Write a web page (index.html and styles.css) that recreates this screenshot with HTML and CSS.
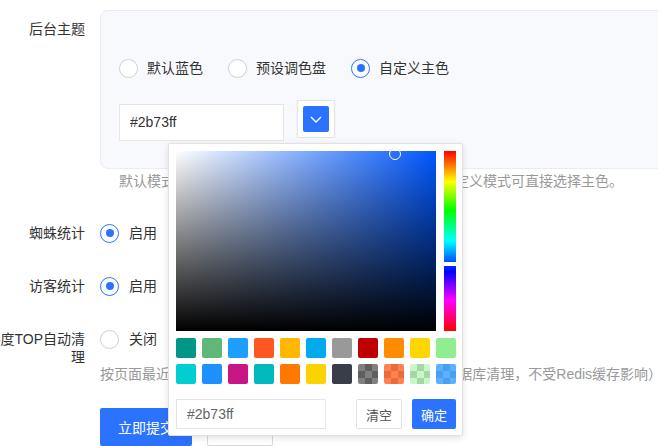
FILE: index.html
```html
<!DOCTYPE html>
<html lang="zh-CN">
<head>
<meta charset="utf-8">
<title>后台主题</title>
<link rel="stylesheet" href="styles.css">
</head>
<body>
<form class="form">
  <div class="row row-theme">
    <div class="label">后台主题</div>
    <div class="field">
      <div class="theme-card">
        <div class="radio-group">
          <label class="radio"><span class="circle"></span><span class="text">默认蓝色</span></label>
          <label class="radio"><span class="circle"></span><span class="text">预设调色盘</span></label>
          <label class="radio checked"><span class="circle"></span><span class="text">自定义主色</span></label>
        </div>
        <div class="color-row">
          <div class="color-input">#2b73ff</div>
          <div class="trigger">
            <span class="trigger-swatch">
              <svg width="12" height="7" viewBox="0 0 12 7"><polyline points="1,1 6,6 11,1" fill="none" stroke="#fff" stroke-width="1.4"/></svg>
            </span>
          </div>
          <div class="popup">
            <div class="sv-row">
              <div class="sat"><span class="sat-cursor"></span></div>
              <div class="hue"><span class="hue-thumb"></span></div>
            </div>
            <div class="swatches">
              <span class="sw" style="--c:#009688"></span>
              <span class="sw" style="--c:#5fb878"></span>
              <span class="sw" style="--c:#1e9fff"></span>
              <span class="sw" style="--c:#ff5722"></span>
              <span class="sw" style="--c:#ffb800"></span>
              <span class="sw" style="--c:#01aaed"></span>
              <span class="sw" style="--c:#999999"></span>
              <span class="sw" style="--c:#c00000"></span>
              <span class="sw" style="--c:#ff8c00"></span>
              <span class="sw" style="--c:#ffd700"></span>
              <span class="sw" style="--c:#90ee90"></span>
              <span class="sw" style="--c:#00ced1"></span>
              <span class="sw" style="--c:#1e90ff"></span>
              <span class="sw" style="--c:#c71585"></span>
              <span class="sw" style="--c:#00babd"></span>
              <span class="sw" style="--c:#ff7800"></span>
              <span class="sw" style="--c:#fad400"></span>
              <span class="sw" style="--c:#393d49"></span>
              <span class="sw alpha" style="--c:rgba(0,0,0,.5)"></span>
              <span class="sw alpha" style="--c:rgba(255,69,0,.68)"></span>
              <span class="sw alpha" style="--c:rgba(144,240,144,.5)"></span>
              <span class="sw alpha" style="--c:rgba(31,147,255,.73)"></span>
            </div>
            <div class="actions">
              <div class="pop-input">#2b73ff</div>
              <button type="button" class="btn-sm btn-clear">清空</button>
              <button type="button" class="btn-sm btn-ok">确定</button>
            </div>
          </div>
        </div>
      </div>
      <div class="hint hint-theme">默认模式使用系统蓝色，预设调色盘可选常用颜色，自定义模式可直接选择主色。</div>
    </div>
  </div>

  <div class="row">
    <div class="label">蜘蛛统计</div>
    <div class="field">
      <label class="radio checked"><span class="circle"></span><span class="text">启用</span></label>
    </div>
  </div>

  <div class="row">
    <div class="label">访客统计</div>
    <div class="field">
      <label class="radio checked"><span class="circle"></span><span class="text">启用</span></label>
    </div>
  </div>

  <div class="row">
    <div class="label">热度TOP自动清理</div>
    <div class="field">
      <label class="radio"><span class="circle"></span><span class="text">关闭</span></label>
      <div class="hint hint-clean">按页面最近7天访问量自动清理热度TOP以外的数据（仅数据库清理，不受Redis缓存影响）</div>
    </div>
  </div>

  <div class="row row-actions">
    <div class="label"></div>
    <div class="field buttons">
      <button type="button" class="btn btn-primary">立即提交</button>
      <button type="button" class="btn btn-default">重置</button>
    </div>
  </div>
</form>
</body>
</html>
```

FILE: styles.css
```css
html, body {
  margin: 0;
  padding: 0;
  background: #fff;
  overflow: hidden;
}

body {
  font-family: "Liberation Sans", "Noto Sans CJK SC", sans-serif;
  font-size: 14px;
  color: #333;
}

.form {
  width: 780px;
  margin-left: -21px;
  padding-top: 10px;
  display: flex;
  flex-direction: column;
  gap: 15px;
}

.row {
  display: grid;
  grid-template-columns: 121px 1fr;
}

.row-theme {
  margin-bottom: 6px;
}

.label {
  padding: 10px 15px 0 0;
  line-height: 18px;
  text-align: right;
  color: #333;
}

.field {
  min-width: 0;
}

/* theme card */
.theme-card {
  border: 1px solid #e9ecf2;
  border-radius: 8px;
  background: #f8f9fc;
  padding: 43px 18px 27px;
}

.radio-group {
  display: flex;
  align-items: center;
  gap: 25px;
  height: 28px;
}

.radio {
  display: inline-flex;
  align-items: center;
  gap: 10px;
  height: 38px;
  line-height: 20px;
  cursor: pointer;
}

.radio-group .radio {
  height: 28px;
  gap: 9px;
}

.circle {
  width: 19px;
  height: 19px;
  box-sizing: border-box;
  border: 1.5px solid #cdd1d9;
  border-radius: 50%;
  background: #fff;
  display: inline-flex;
  align-items: center;
  justify-content: center;
  flex: none;
}

.radio.checked .circle {
  border-color: #2b73ff;
}

.radio.checked .circle::after {
  content: "";
  width: 8px;
  height: 8px;
  border-radius: 50%;
  background: #2b73ff;
}

.text {
  color: #333;
}

.color-row {
  position: relative;
  display: flex;
  align-items: flex-start;
  margin-top: 18px;
}

.color-input {
  width: 165px;
  height: 37px;
  box-sizing: border-box;
  margin-top: 4px;
  border: 1px solid #e6e6e6;
  background: #fff;
  padding-left: 10px;
  line-height: 35px;
  color: #333;
}

.trigger {
  margin-left: 13px;
  width: 38px;
  height: 38px;
  box-sizing: border-box;
  border: 1px solid #e3e3e3;
  border-radius: 2px;
  background: #fff;
  padding: 5px;
  box-shadow: 0 0 2px rgba(0,0,0,.06);
}

.trigger-swatch {
  display: flex;
  align-items: center;
  justify-content: center;
  width: 26px;
  height: 26px;
  border-radius: 2px;
  background: #2b73ff;
}

/* popup */
.popup {
  position: absolute;
  left: 49px;
  top: 43px;
  z-index: 10;
  width: 280px;
  padding: 7px 6px 6px 7px;
  background: #fff;
  border: 1px solid #e2e2e2;
  border-radius: 2px;
  box-shadow: 0 2px 6px rgba(0,0,0,.12);
}

.sv-row {
  display: flex;
  gap: 8px;
  height: 180px;
}

.sat {
  position: relative;
  width: 260px;
  height: 180px;
  background:
    linear-gradient(to top, #000, rgba(0,0,0,0)),
    linear-gradient(to right, #fff, rgba(255,255,255,0)),
    #0057ff;
}

.sat-cursor {
  position: absolute;
  left: 213px;
  top: -3px;
  width: 12px;
  height: 12px;
  box-sizing: border-box;
  border: 1px solid #fff;
  border-radius: 50%;
  box-shadow: 0 0 1px rgba(0,0,0,.3);
}

.hue {
  position: relative;
  width: 12px;
  height: 180px;
  background: linear-gradient(to bottom, #f00 0%, #ff0 17%, #0f0 33%, #0ff 50%, #00f 67%, #f0f 83%, #f00 100%);
}

.hue-thumb {
  position: absolute;
  left: -1px;
  top: 111px;
  width: 14px;
  height: 4px;
  background: #fff;
  box-shadow: 0 0 1px rgba(0,0,0,.35);
}

.swatches {
  margin-top: 7px;
  display: grid;
  grid-template-columns: repeat(11, 20px);
  gap: 6px;
}

.sw {
  width: 20px;
  height: 20px;
  border-radius: 2px;
  background: var(--c);
}

.sw.alpha {
  background:
    linear-gradient(var(--c), var(--c)),
    repeating-conic-gradient(#bdbdbd 0 25%, #fff 0 50%) 0 0 / 14px 14px;
}

.actions {
  margin-top: 15px;
  display: flex;
  align-items: center;
  gap: 10px;
  height: 30px;
}

.pop-input {
  width: 150px;
  height: 30px;
  box-sizing: border-box;
  border: 1px solid #e6e6e6;
  padding-left: 10px;
  line-height: 28px;
  color: #666;
  margin-right: 20px;
}

.btn-sm {
  height: 30px;
  box-sizing: border-box;
  border-radius: 2px;
  font-family: inherit;
  font-size: 13px;
  padding: 0;
  cursor: pointer;
}

.btn-clear {
  width: 46px;
  border: 1px solid #e2e2e2;
  background: #fff;
  color: #555;
}

.btn-ok {
  width: 44px;
  border: none;
  background: #2b73ff;
  color: #fff;
}

/* hints */
.hint {
  color: #999;
  line-height: 24px;
  white-space: nowrap;
}

.hint-theme {
  padding-left: 19px;
}

.hint-clean {
  margin-top: 4px;
}

/* buttons */
.row-actions {
  margin-top: 7px;
}

.buttons {
  display: flex;
  gap: 15px;
}

.btn {
  height: 38px;
  box-sizing: border-box;
  padding: 0 18px;
  border-radius: 2px;
  font-family: inherit;
  font-size: 14px;
  cursor: pointer;
}

.btn-primary {
  border: none;
  background: #2b73ff;
  color: #fff;
}

.btn-default {
  border: 1px solid #d9d9d9;
  background: #fff;
  color: #333;
}
```
